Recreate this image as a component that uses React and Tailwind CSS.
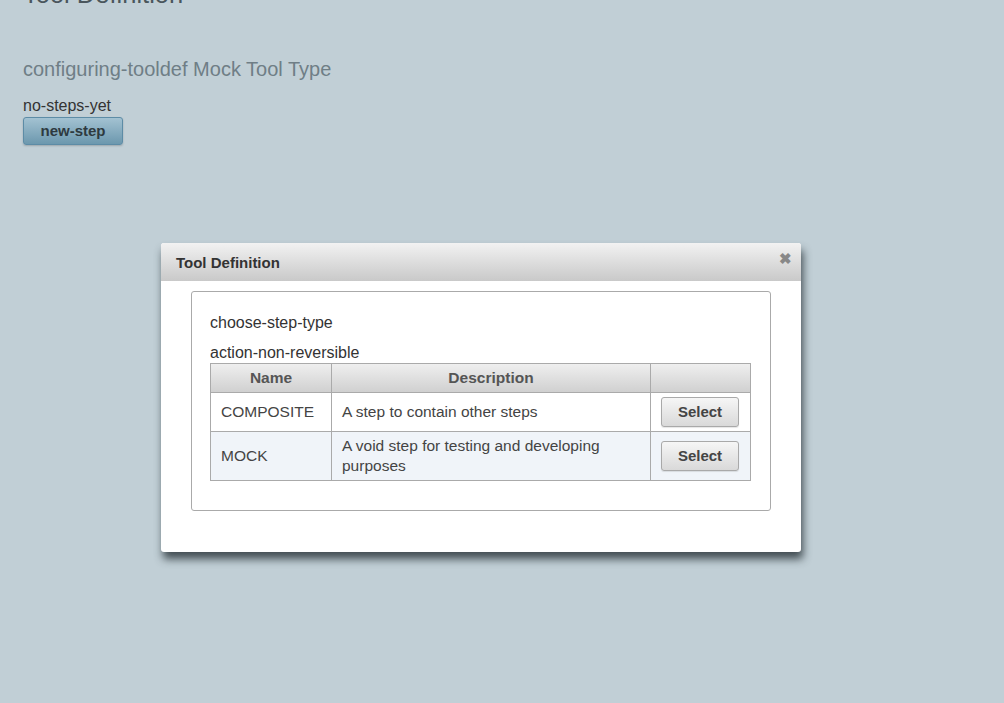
import React from 'react';

const steps = [
  { name: 'COMPOSITE', description: 'A step to contain other steps' },
  { name: 'MOCK', description: 'A void step for testing and developing purposes' },
];

const SelectButton = () => (
  <button className="h-[30px] w-[78px] rounded-[3px] border border-[#a9a9a9] bg-gradient-to-b from-[#f6f6f6] to-[#d9d9d9] text-[15px] font-bold text-[#444] shadow-[0_1px_1px_rgba(0,0,0,0.1)]">
    Select
  </button>
);

const App = () => (
  <div className="relative flex min-h-screen flex-col bg-[#c1cfd6] font-['Liberation_Sans',Arial,sans-serif] text-[#333]">
    <div className="flex flex-col items-start pl-[23px]">
      <h1 className="-mt-[21px] text-[25.5px] leading-[30px] text-[#4a565c]">Tool Definition</h1>
      <h2 className="mt-[48px] text-[20px] leading-[24px] text-[#6f7e86]">configuring-tooldef Mock Tool Type</h2>
      <p className="mt-[16px] text-[16px] leading-[18px]">no-steps-yet</p>
      <button className="mt-[2px] h-[28px] w-[100px] rounded-[3px] border border-[#5d8ca6] bg-gradient-to-b from-[#a3c2d2] to-[#6c98ae] text-[15px] font-bold text-[#2e3a40] shadow-[0_1px_2px_rgba(0,0,0,0.2)]">
        new-step
      </button>
    </div>

    <div className="absolute left-[161px] top-[243px] w-[640px] h-[309px] rounded-[3px] bg-white shadow-[2px_7px_9px_rgba(35,45,50,0.8)]">
      <div className="relative flex h-[38px] items-center rounded-t-[3px] bg-gradient-to-b from-[#f2f2f2] to-[#c9c9c9] pl-[15px] pt-[3px]">
        <span className="text-[15px] font-bold text-[#333]">Tool Definition</span>
        <span className="absolute right-[9px] top-[8px] text-[15px] font-bold leading-none text-[#888]">✖</span>
      </div>
      <div className="mx-[30px] mt-[10px] h-[220px] rounded-[3px] border border-[#aaa] px-[18px] pt-[22px]">
        <p className="text-[16px] leading-[18px]">choose-step-type</p>
        <p className="mt-[12px] text-[16px] leading-[18px]">action-non-reversible</p>
        <table className="mt-[1px] w-[541px] border-collapse text-[15.5px] text-[#444]">
          <thead>
            <tr className="h-[29px] bg-gradient-to-b from-[#efefef] to-[#cfcfcf]">
              <th className="w-[121px] border border-[#aaa] font-bold text-[#555]">Name</th>
              <th className="w-[319px] border border-[#aaa] font-bold text-[#555]">Description</th>
              <th className="border border-[#aaa]"></th>
            </tr>
          </thead>
          <tbody>
            {steps.map((s, i) => (
              <tr key={s.name} className={i === 1 ? 'h-[49px] bg-[#f0f4f9]' : 'h-[39px] bg-white'}>
                <td className="border border-[#aaa] px-[10px] leading-[20px]">{s.name}</td>
                <td className="border border-[#aaa] px-[10px] leading-[20px]">{s.description}</td>
                <td className="border border-[#aaa] pl-[10px]">
                  <SelectButton />
                </td>
              </tr>
            ))}
          </tbody>
        </table>
      </div>
    </div>
  </div>
);

export default App;
